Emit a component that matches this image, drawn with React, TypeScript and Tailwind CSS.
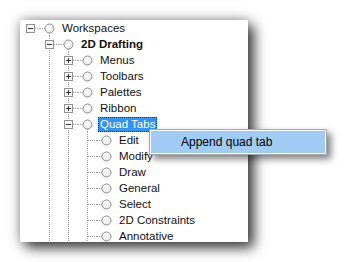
import React from "react";

type Row = {
  level: number;
  label: string;
  toggle?: "plus" | "minus";
  bold?: boolean;
  selected?: boolean;
};

const rows: Row[] = [
  { level: 0, label: "Workspaces", toggle: "minus" },
  { level: 1, label: "2D Drafting", toggle: "minus", bold: true },
  { level: 2, label: "Menus", toggle: "plus" },
  { level: 2, label: "Toolbars", toggle: "plus" },
  { level: 2, label: "Palettes", toggle: "plus" },
  { level: 2, label: "Ribbon", toggle: "plus" },
  { level: 2, label: "Quad Tabs", toggle: "minus", selected: true },
  { level: 3, label: "Edit" },
  { level: 3, label: "Modify" },
  { level: 3, label: "Draw" },
  { level: 3, label: "General" },
  { level: 3, label: "Select" },
  { level: 3, label: "2D Constraints" },
  { level: 3, label: "Annotative" },
];

const DOT = "#a0a0a0";

// vertical guide line for an ancestor level
const Guide = ({ show }: { show: boolean }) => (
  <svg width="19" height="16" className="shrink-0 block">
    {show && (
      <line x1="9.5" y1="0" x2="9.5" y2="16" stroke={DOT} strokeDasharray="1 1" />
    )}
  </svg>
);

// expander cell: box with +/- plus connector dots
const Expander = ({ row }: { row: Row }) => (
  <svg width="19" height="16" className="shrink-0 block">
    {row.level > 0 && (
      <line x1="9.5" y1="0" x2="9.5" y2="16" stroke={DOT} strokeDasharray="1 1" />
    )}
    <line x1="10" y1="8.5" x2="19" y2="8.5" stroke={DOT} strokeDasharray="1 1" />
    {row.toggle && (
      <g>
        <rect x="5.5" y="4.5" width="8" height="8" fill="#f7f7f7" stroke="#919191" />
        <line x1="7" y1="8.5" x2="12" y2="8.5" stroke="#333" />
        {row.toggle === "plus" && (
          <line x1="9.5" y1="6" x2="9.5" y2="11" stroke="#333" />
        )}
      </g>
    )}
  </svg>
);

const Node = ({ open }: { open: boolean }) => (
  <svg width="19" height="16" className="shrink-0 block">
    <line x1="0" y1="8.5" x2="5" y2="8.5" stroke={DOT} strokeDasharray="1 1" />
    {open && (
      <line x1="9.5" y1="13" x2="9.5" y2="16" stroke={DOT} strokeDasharray="1 1" />
    )}
    <defs>
      <radialGradient id="nodeFill" cx="40%" cy="35%" r="70%">
        <stop offset="0%" stopColor="#ffffff" />
        <stop offset="100%" stopColor="#e4e4e4" />
      </radialGradient>
    </defs>
    <circle cx="9.5" cy="8.5" r="4.5" fill="url(#nodeFill)" stroke="#8e8e8e" />
  </svg>
);

export default function App() {
  return (
    <div
      className="w-[348px] h-[262px] bg-white relative overflow-hidden pt-[20px] pl-[20px]"
      style={{ fontFamily: '"Liberation Sans", Arial, sans-serif' }}
    >
      {/* tree panel */}
      <div className="w-[228px] h-[222px] bg-white overflow-hidden pl-[1px] shadow-[6px_6px_12px_rgba(0,0,0,0.7),0_0_12px_rgba(0,0,0,0.35)]">
        {rows.map((row, i) => (
          <div key={i} className="flex items-center h-[16px]">
            {Array.from({ length: row.level }).map((_, k) => (
              <Guide key={k} show={k > 0} />
            ))}
            <Expander row={row} />
            <Node open={row.toggle === "minus"} />
            <span
              className={
                "ml-[1px] px-[1px] h-[15px] leading-[13px] text-[11.5px] whitespace-nowrap border " +
                (row.selected
                  ? "bg-[#3393f2] text-white border-dotted border-[#15406e]"
                  : "text-[#111] border-transparent") +
                (row.bold ? " font-bold" : "")
              }
            >
              {row.label}
            </span>
          </div>
        ))}
      </div>

      {/* context menu */}
      <div className="absolute left-[149px] top-[129px] w-[178px] h-[26px] border border-[#a7a7a7] bg-white p-[1px] shadow-[4px_4px_7px_rgba(0,0,0,0.5)]">
        <div className="h-full bg-[#9fcbf5] flex items-center pl-[30px] text-[12px] text-black">
          Append quad tab
        </div>
      </div>
    </div>
  );
}
